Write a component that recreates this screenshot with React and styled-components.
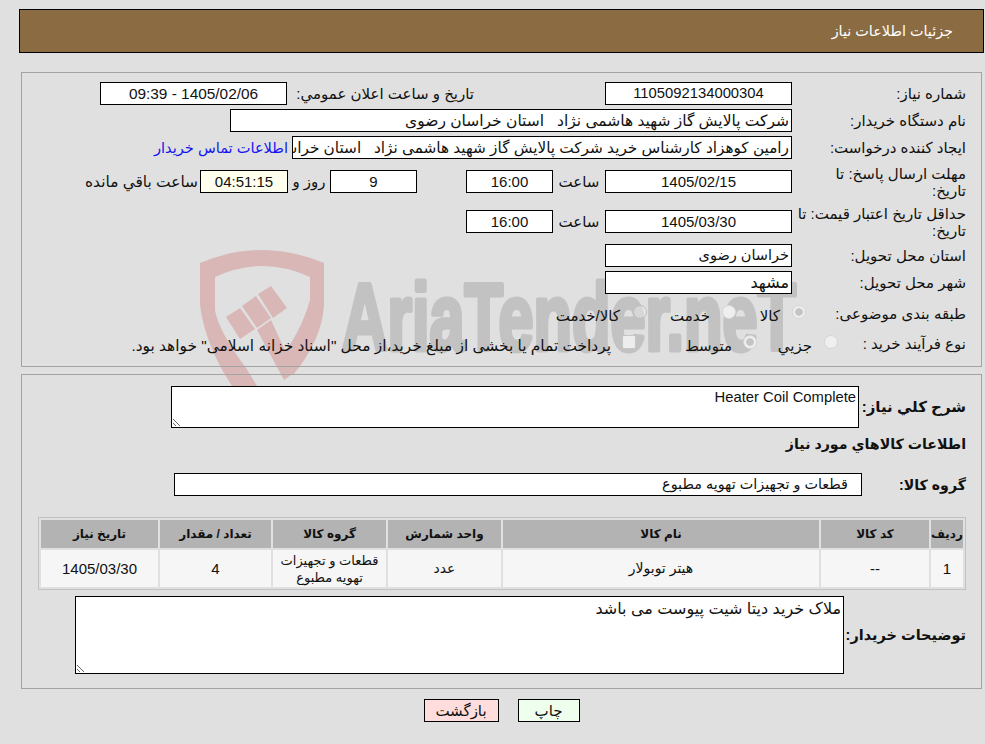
import React from "react";
import styled, { createGlobalStyle } from "styled-components";

const Global = createGlobalStyle`
  html, body { margin: 0; padding: 0; background: #e0e0e0; }
  body { font-family: "Liberation Sans", "DejaVu Sans", "Noto Sans", sans-serif; font-size: 15px; line-height: 18px; color: #111; }
`;

const Page = styled.div`
  position: relative;
  width: 965px;
  height: 735px;
  padding: 9px 0 0 19px;
  direction: rtl;
`;

const Watermark = styled.svg`
  position: absolute;
  left: 0;
  top: 0;
  width: 985px;
  height: 744px;
  pointer-events: none;
`;

const Content = styled.div`
  position: relative;
`;

const Header = styled.header`
  box-sizing: border-box;
  height: 44px;
  background: #8b6c42;
  border: 1px solid #000;
  color: #fff;
  padding-right: 30px;
  line-height: 42px;
  font-size: 14.4px;
`;

const Panel = styled.section`
  box-sizing: border-box;
  width: 961px;
  margin: ${(p) => p.$top}px 2px 0 0;
  border: 1px solid #a3a3a3;
  padding: ${(p) => p.$padTop}px 15px ${(p) => p.$padBottom}px 0;
`;

const Row = styled.div`
  display: flex;
  align-items: center;
  height: ${(p) => p.$h || 23}px;
  margin-top: ${(p) => p.$gap || 0}px;
`;

const Label = styled.div`
  flex: none;
  width: ${(p) => p.$w || 174}px;
  box-sizing: border-box;
  line-height: ${(p) => (p.$tall ? 17 : 18)}px;
  font-weight: ${(p) => (p.$bold ? "bold" : "normal")};
  font-size: ${(p) => p.$fs || 15}px;
  padding-right: ${(p) => p.$pad || 0}px;
  white-space: nowrap;
`;

const Field = styled.div`
  flex: none;
  box-sizing: border-box;
  width: ${(p) => p.$w}px;
  height: 23px;
  background: ${(p) => p.$bg || "#fff"};
  border: 1px solid #000;
  line-height: 21px;
  font-size: ${(p) => p.$fs || 15}px;
  text-align: ${(p) => (p.$num ? "center" : "right")};
  padding: 0 ${(p) => p.$padR ?? 2}px 0 2px;
  white-space: pre;
  overflow: hidden;
`;

const Unit = styled.div`
  flex: none;
  width: ${(p) => p.$w}px;
  text-align: center;
  white-space: nowrap;
  font-size: ${(p) => p.$fs || 15}px;
`;

const ContactLink = styled.a`
  color: #1414f0;
  margin-right: 4px;
  white-space: nowrap;
  text-decoration: none;
  font-size: 14.6px;
`;

const Option = styled.div`
  flex: none;
  display: flex;
  align-items: center;
  width: ${(p) => (p.$w ? `${p.$w}px` : "auto")};
  white-space: nowrap;
`;

const OptionText = styled.span`
  margin-right: ${(p) => p.$gap || 12}px;
  padding-top: 4px;
  font-size: ${(p) => p.$fs || 15}px;
`;

const Radio = styled.span`
  flex: none;
  box-sizing: border-box;
  width: 14px;
  height: 14px;
  border-radius: 50%;
  background: ${(p) => (p.$on ? "radial-gradient(circle, #c4c4c4 0 3.5px, #efefef 4px)" : p.$faint ? "rgba(235,235,235,.5)" : "#efefef")};
  border: 1px solid ${(p) => (p.$faint ? "#bdbdbd" : "#d6d6d6")};
  transform: translateY(-2px);
`;

const Check = styled.span`
  flex: none;
  box-sizing: border-box;
  width: 14px;
  height: 14px;
  border-radius: 2px;
  background: #ededed;
  border: 1px solid #c6c6c6;
  transform: translateY(-2px);
`;

const Area = styled.textarea`
  flex: none;
  display: block;
  box-sizing: border-box;
  width: ${(p) => p.$w}px;
  height: ${(p) => p.$h}px;
  border: 1px solid #000;
  border-radius: 0;
  outline: none;
  background: #fff;
  color: #111;
  padding: 2px;
  margin: 0;
  font: ${(p) => p.$fs || 15}px "Liberation Sans", "DejaVu Sans", sans-serif;
  direction: rtl;
`;

const Heading = styled.h3`
  margin: 6px 0 0;
  height: 20px;
  font-size: 14.2px;
  line-height: 20px;
  font-weight: bold;
`;

const Table = styled.table`
  table-layout: fixed;
  width: 928px;
  margin-top: 21px;
  border: 1px solid #c2c2c2;
  border-collapse: separate;
  border-spacing: 2px;
`;

const Th = styled.th`
  width: ${(p) => p.$w}px;
  height: 28px;
  padding: 0;
  background: #b3b3b3;
  font-size: 12px;
  font-weight: bold;
  text-align: center;
`;

const Td = styled.td`
  height: 37px;
  padding: 0;
  background: #f6f6f6;
  text-align: center;
  line-height: 17px;
  font-size: ${(p) => p.$fs || 14}px;
`;

const Buttons = styled.div`
  display: flex;
  justify-content: center;
  gap: 19px;
  margin-top: 10px;
`;

const Button = styled.button`
  box-sizing: border-box;
  width: ${(p) => p.$w}px;
  height: 23px;
  padding: 0;
  border: 1px solid #000;
  border-radius: 0;
  background: ${(p) => p.$bg};
  color: #111;
  font: 15px "Liberation Sans", "DejaVu Sans", sans-serif;
`;

const columns = [
  ["رديف", 32],
  ["کد کالا", 108],
  ["نام کالا", 316],
  ["واحد شمارش", 113],
  ["گروه کالا", 113],
  ["تعداد / مقدار", 111],
  ["تاريخ نياز", 117],
];

export default function App() {
  return (
    <Page>
      <Global />
      <Watermark viewBox="0 0 985 744" aria-hidden="true">
        <g fill="#d9b7b7">
          <path d="M200 263 Q262 237 324 263 L324 305 Q322 340 293 375 L277 362 Q300 335 310 300 L310 277 Q262 255 215 277 L215 310 Q218 330 246 368 L257 386 L232 386 Q205 345 200 305 Z" />
          <path d="M226 317 L240 308 L255 329 L240 339 Z" />
          <path d="M242 306 L256 296 L271 318 L257 328 Z" />
          <path d="M258 294 L271 286 L287 308 L273 318 Z" />
          <path d="M257 330 L271 320 L295 372 L284 380 Z" />
        </g>
        <text x="342" y="350" fontFamily="'Liberation Sans', sans-serif" fontWeight="bold" fontSize="94" fill="#c2c2c2" stroke="#c2c2c2" strokeWidth="5" strokeLinejoin="round" textLength="454" lengthAdjust="spacingAndGlyphs" direction="ltr">AriaTender.neT</text>
      </Watermark>
      <Content>
        <Header>جزئيات اطلاعات نياز</Header>

        <Panel $top={19} $padTop={9} $padBottom={11}>
          <Row>
            <Label>شماره نياز:</Label>
            <Field $w={187} $num $fs={14.8}>1105092134000304</Field>
            <Label $w={318} $pad={131}>تاريخ و ساعت اعلان عمومي:</Label>
            <Field $w={187} $num $fs={15.4}>1405/02/06 - 09:39</Field>
          </Row>
          <Row $gap={4}>
            <Label>نام دستگاه خريدار:</Label>
            <Field $w={562} $fs={15.5}>شرکت پالايش گاز شهيد هاشمی نژاد   استان خراسان رضوی</Field>
          </Row>
          <Row $gap={4}>
            <Label>ايجاد کننده درخواست:</Label>
            <Field $w={500} $fs={15.3}>رامين کوهزاد کارشناس خريد شرکت پالايش گاز شهيد هاشمی نژاد   استان خراسان رضوی</Field>
            <ContactLink href="#">اطلاعات تماس خريدار</ContactLink>
          </Row>
          <Row $gap={11}>
            <Label $tall>مهلت ارسال پاسخ: تا<br />تاريخ:</Label>
            <Field $w={187} $num>1405/02/15</Field>
            <Unit $w={52}>ساعت</Unit>
            <Field $w={87} $num>16:00</Field>
            <Unit $w={49} />
            <Field $w={87} $num>9</Field>
            <Unit $w={42}>روز و</Unit>
            <Field $w={88} $num $bg="#ffffee">04:51:15</Field>
            <Unit $w={117} $fs={15.4}>ساعت باقي مانده</Unit>
          </Row>
          <Row $gap={17}>
            <Label $tall>حداقل تاريخ اعتبار قيمت: تا<br />تاريخ:</Label>
            <Field $w={187} $num>1405/03/30</Field>
            <Unit $w={52}>ساعت</Unit>
            <Field $w={87} $num>16:00</Field>
          </Row>
          <Row $gap={11}>
            <Label>استان محل تحويل:</Label>
            <Field $w={187} $fs={14.5}>خراسان رضوی</Field>
          </Row>
          <Row $gap={4}>
            <Label>شهر محل تحويل:</Label>
            <Field $w={187} $fs={16}>مشهد</Field>
          </Row>
          <Row $gap={8}>
            <Label $w={160}>طبقه بندی موضوعی:</Label>
            <Option $w={70}><Radio $on /><OptionText>کالا</OptionText></Option>
            <Option $w={89}><Radio /><OptionText>خدمت</OptionText></Option>
            <Option><Radio $faint /><OptionText $gap={13}>کالا/خدمت</OptionText></Option>
          </Row>
          <Row $gap={7}>
            <Label $w={128}>نوع فرآيند خريد :</Label>
            <Option $w={81}><Radio /><OptionText>جزيي</OptionText></Option>
            <Option $w={121}><Radio $on /><OptionText $gap={11}>متوسط</OptionText></Option>
            <Option><Check /><OptionText $gap={11} $fs={15.4}>پرداخت تمام يا بخشی از مبلغ خريد،از محل "اسناد خزانه اسلامی" خواهد بود.</OptionText></Option>
          </Row>
        </Panel>

        <Panel $top={7} $padTop={11} $padBottom={14}>
          <Row $h={42}>
            <Label $w={107} $bold>شرح کلي نياز:</Label>
            <Area $w={688} $h={42} $fs={14.8} readOnly defaultValue="Heater Coil Complete" />
          </Row>
          <Heading>اطلاعات کالاهاي مورد نياز</Heading>
          <Row $gap={19}>
            <Label $w={104} $bold $fs={14.2}>گروه کالا:</Label>
            <Field $w={688} $padR={13} $fs={14.4}>قطعات و تجهيزات تهويه مطبوع</Field>
          </Row>
          <Table>
            <thead>
              <tr>
                {columns.map(([title, width]) => (
                  <Th key={title} $w={width}>{title}</Th>
                ))}
              </tr>
            </thead>
            <tbody>
              <tr>
                <Td $fs={15}>1</Td>
                <Td $fs={15}>--</Td>
                <Td>هيتر توبولار</Td>
                <Td>عدد</Td>
                <Td $fs={13}>قطعات و تجهيزات تهويه مطبوع</Td>
                <Td $fs={15}>4</Td>
                <Td $fs={15}>1405/03/30</Td>
              </tr>
            </tbody>
          </Table>
          <Row $gap={6} $h={78}>
            <Label $w={122} $bold $fs={14.5}>توضيحات خريدار:</Label>
            <Area $w={769} $h={78} $fs={16} readOnly defaultValue="ملاک خريد ديتا شيت پيوست می باشد" />
          </Row>
        </Panel>

        <Buttons>
          <Button $w={62} $bg="#eeffee">چاپ</Button>
          <Button $w={75} $bg="#ffdddd">بازگشت</Button>
        </Buttons>
      </Content>
    </Page>
  );
}
